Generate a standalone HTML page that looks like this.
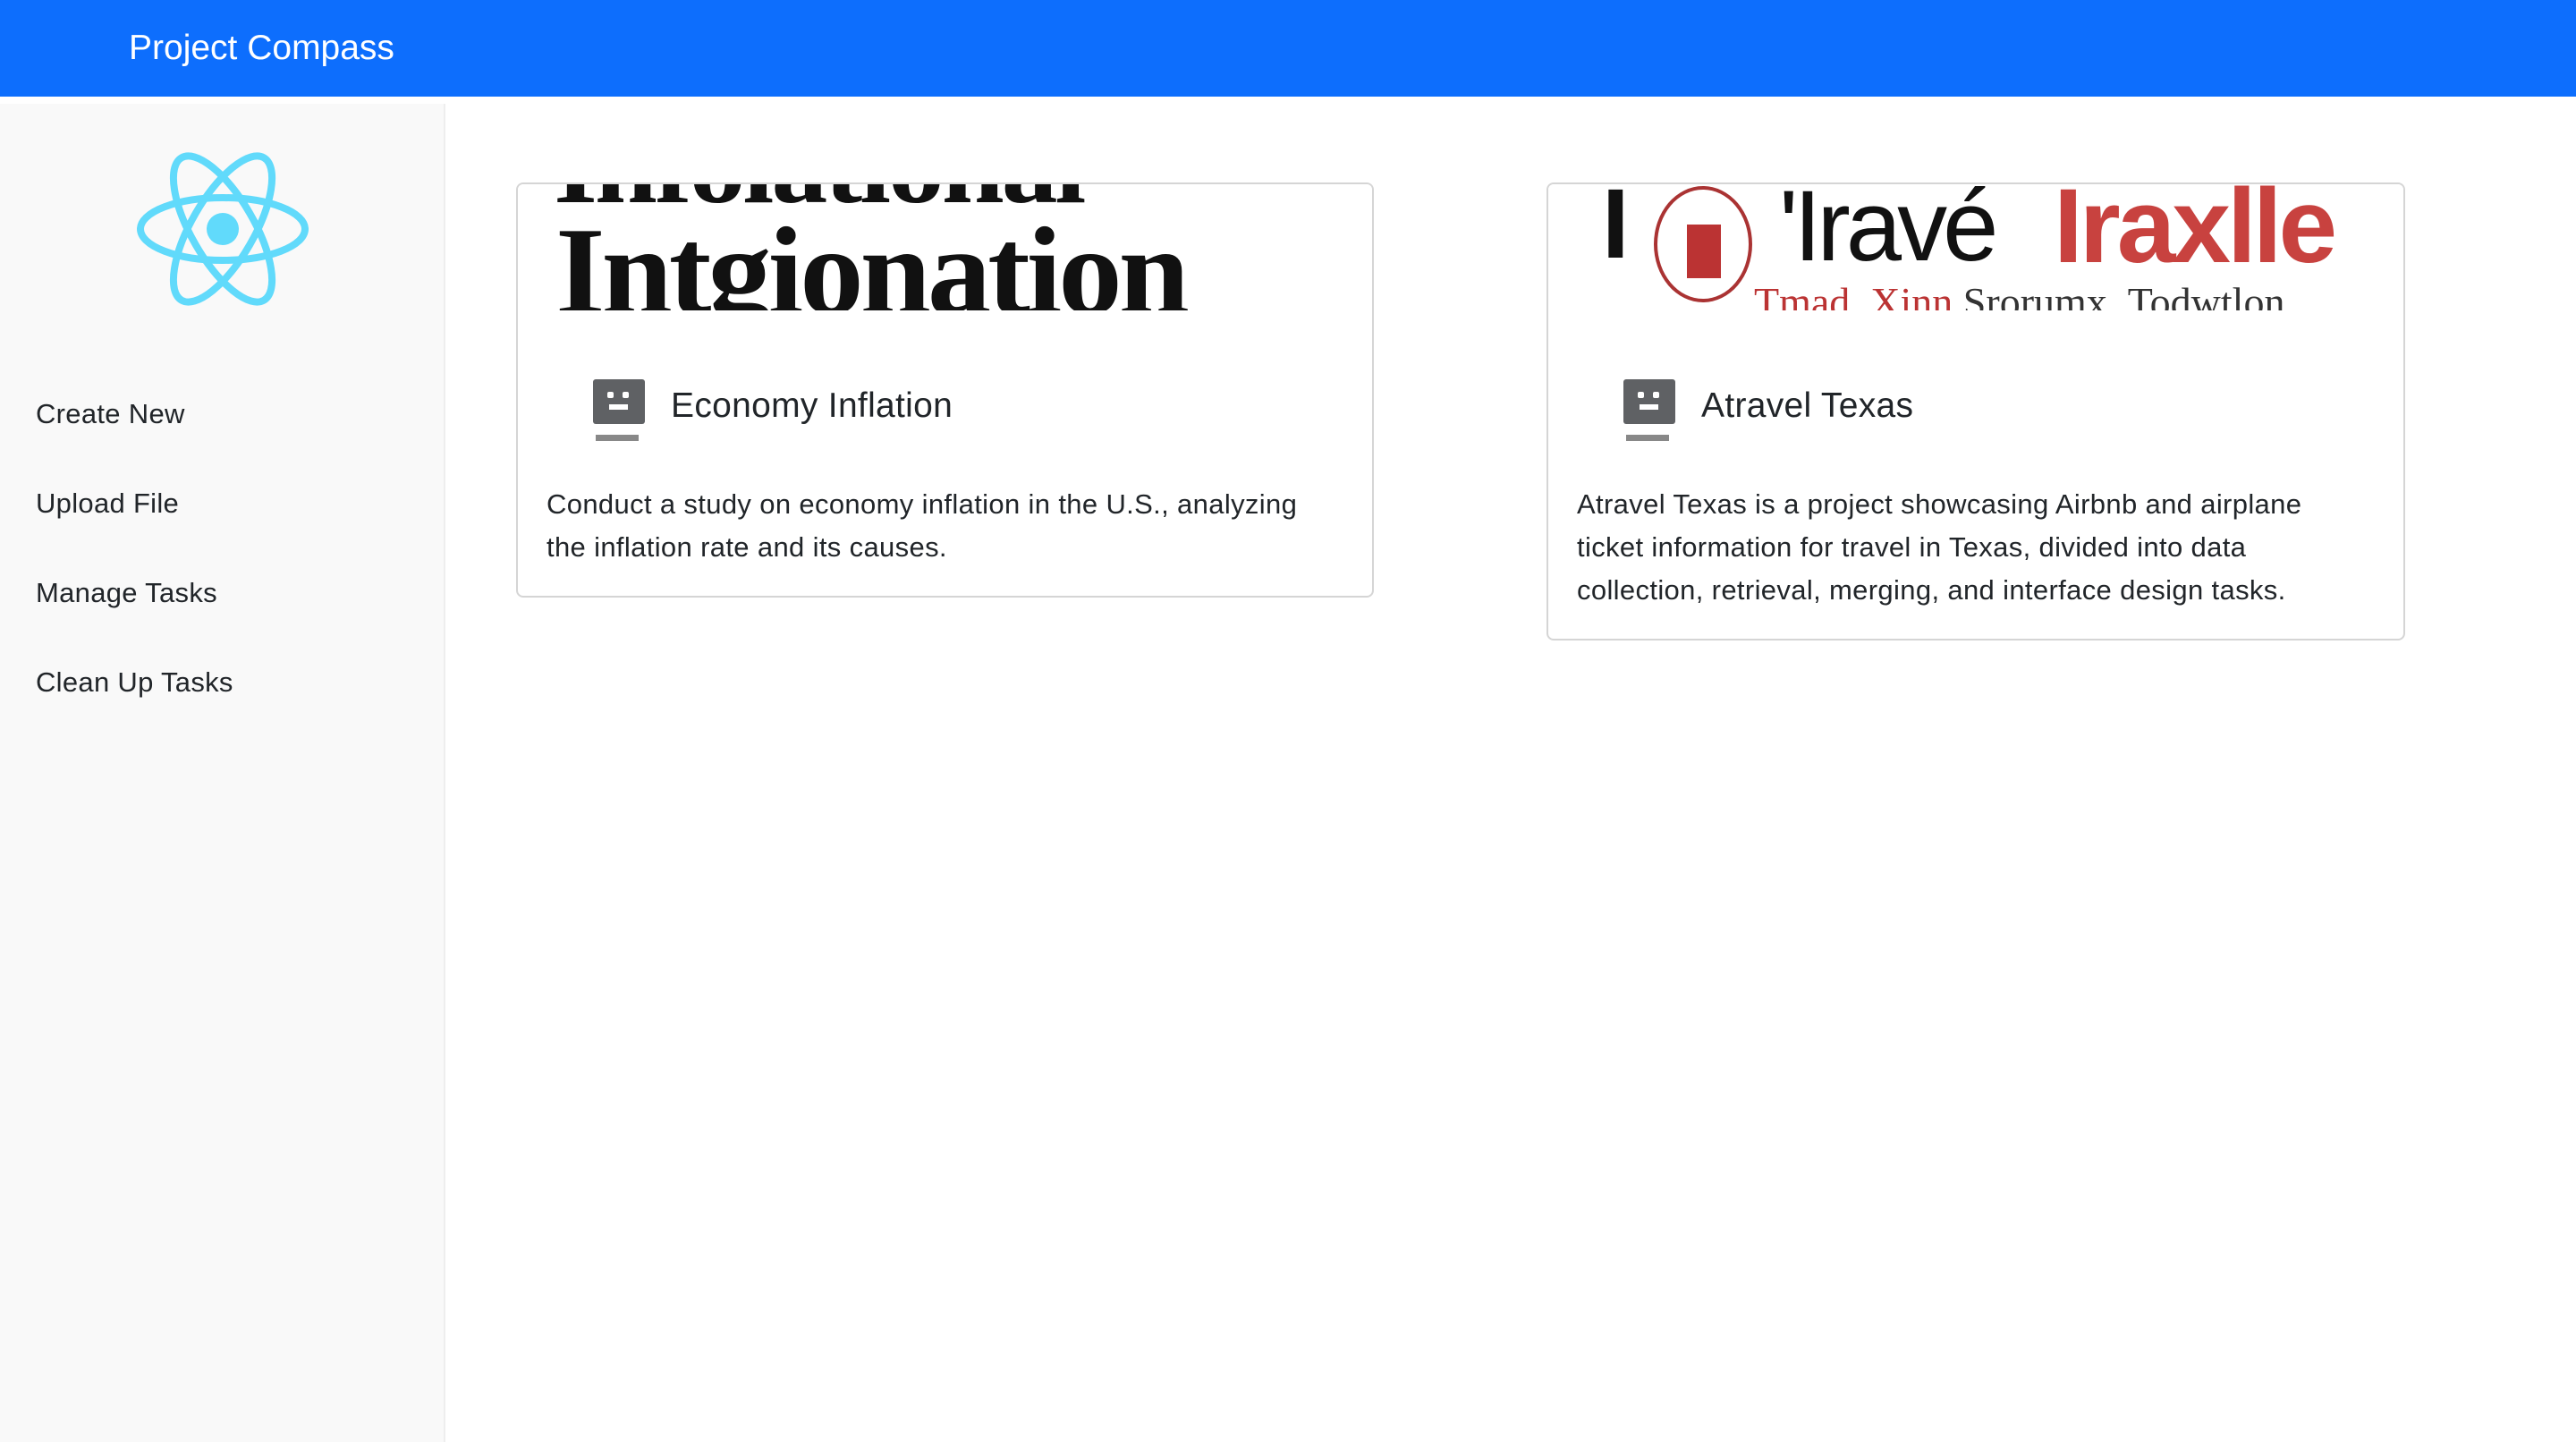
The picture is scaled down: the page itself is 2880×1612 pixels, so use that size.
<!DOCTYPE html>
<html><head><meta charset="utf-8"><style>
*{margin:0;padding:0;box-sizing:border-box}
body{width:2880px;height:1612px;overflow:hidden;background:#fff;font-family:"Liberation Sans",sans-serif;color:#212529;position:relative}
.hdr{position:absolute;left:0;top:0;width:2880px;height:108px;background:#0d6efd}
.hdr span{position:absolute;left:144px;top:32px;font-size:39px;color:#fff}
.side{position:absolute;left:0;top:116px;width:498px;height:1496px;background:#f9f9f9;border-right:2px solid #eee}
.menu{position:absolute;left:40px;font-size:31px;color:#212529;letter-spacing:0.3px}
.card{position:absolute;border:2px solid #d5d5d5;border-radius:8px;background:#fff;overflow:hidden}
.img{position:absolute;left:0;top:0;right:0;height:141px;overflow:hidden;background:#fff}
.ico{position:absolute;width:58px;height:50px;background:#5f6164;border-radius:3px}
.ico:before,.ico:after{content:"";position:absolute;top:14px;width:7px;height:7px;background:#fff;border-radius:2px}
.ico:before{left:16px}.ico:after{left:33px}
.ico i{position:absolute;left:18px;top:28px;width:21px;height:6px;background:#fff}
.ico b{position:absolute;left:3px;top:62px;width:48px;height:7px;background:#888}
.ttl{position:absolute;font-size:39px;color:#212529;letter-spacing:0.3px}
.desc{position:absolute;font-size:31px;line-height:48px;color:#212529;letter-spacing:0.35px}
</style></head><body>
<div class="hdr"><span>Project Compass</span></div>
<div class="side">
<svg style="position:absolute;left:149px;top:50px" width="200" height="180" viewBox="-100 -90 200 180">
<g fill="none" stroke="#61dafb" stroke-width="8">
<ellipse rx="92" ry="35"/>
<ellipse rx="92" ry="35" transform="rotate(60)"/>
<ellipse rx="92" ry="35" transform="rotate(120)"/>
</g><circle r="18" fill="#61dafb"/></svg>
<div class="menu" style="top:329px">Create New</div>
<div class="menu" style="top:429px">Upload File</div>
<div class="menu" style="top:529px">Manage Tasks</div>
<div class="menu" style="top:629px">Clean Up Tasks</div>
</div>

<div class="card" style="left:577px;top:204px;width:959px;height:464px">
<div class="img">
<div style="position:absolute;left:40px;top:-80px;font-family:'Liberation Serif',serif;font-weight:bold;font-size:120px;line-height:120px;color:#111;letter-spacing:-3px;transform:scaleX(1.05);transform-origin:left">Infolational</div>
<div style="position:absolute;left:42px;top:28px;font-family:'Liberation Serif',serif;font-weight:bold;font-size:140px;line-height:140px;color:#111;letter-spacing:-4px;transform:scaleX(1.02);transform-origin:left">Intgionation</div>
</div>
<div class="ico" style="left:84px;top:218px"><i></i><b></b></div>
<div class="ttl" style="left:171px;top:226px">Economy Inflation</div>
<div class="desc" style="left:32px;top:334px;width:880px">Conduct a study on economy inflation in the U.S., analyzing the inflation rate and its causes.</div>
</div>

<div class="card" style="left:1729px;top:204px;width:960px;height:512px">
<div class="img">
<div style="position:absolute;left:60px;top:-10px;font-size:110px;line-height:110px;color:#111;font-weight:bold;letter-spacing:-3px">I</div>
<div style="position:absolute;left:118px;top:2px;width:110px;height:130px;border:4px solid #a33;border-radius:50%"></div>
<div style="position:absolute;left:155px;top:45px;width:38px;height:60px;background:#b33"></div>
<div style="position:absolute;left:258px;top:-8px;font-size:112px;line-height:110px;color:#111;letter-spacing:-5px">'Iravé</div>
<div style="position:absolute;left:565px;top:-8px;font-size:118px;line-height:110px;color:#c8423f;font-weight:bold;letter-spacing:-4px">Iraxlle</div>
<div style="position:absolute;left:230px;top:105px;font-family:'Liberation Serif',serif;font-size:46px;color:#b33;white-space:nowrap">Tmad. Xinn <span style="color:#333">Srorumx &nbsp;Todwtlon</span></div>
</div>
<div class="ico" style="left:84px;top:218px"><i></i><b></b></div>
<div class="ttl" style="left:171px;top:226px">Atravel Texas</div>
<div class="desc" style="left:32px;top:334px;width:880px">Atravel Texas is a project showcasing Airbnb and airplane ticket information for travel in Texas, divided into data collection, retrieval, merging, and interface design tasks.</div>
</div>
</body></html>
